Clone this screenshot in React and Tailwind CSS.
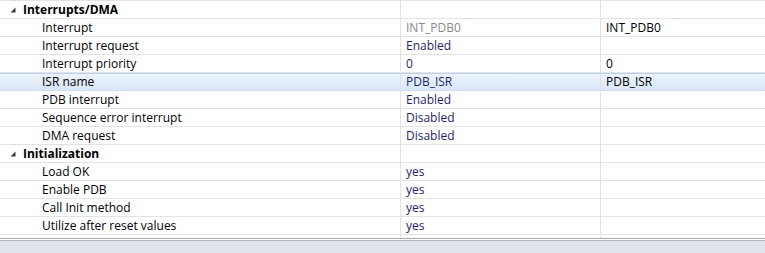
const rows = [
  { group: true, label: "Interrupts/DMA" },
  { label: "Interrupt", v1: "INT_PDB0", v1Muted: true, v2: "INT_PDB0" },
  { label: "Interrupt request", v1: "Enabled" },
  { label: "Interrupt priority", v1: "0", v2: "0" },
  { label: "ISR name", v1: "PDB_ISR", v2: "PDB_ISR", selected: true },
  { label: "PDB interrupt", v1: "Enabled" },
  { label: "Sequence error interrupt", v1: "Disabled" },
  { label: "DMA request", v1: "Disabled" },
  { group: true, label: "Initialization" },
  { label: "Load OK", v1: "yes" },
  { label: "Enable PDB", v1: "yes" },
  { label: "Call Init method", v1: "yes" },
  { label: "Utilize after reset values", v1: "yes" },
];

function Expander() {
  return (
    <svg width="6" height="6" viewBox="0 0 6 6" className="shrink-0">
      <polygon points="5.5,0.5 5.5,5.5 0.5,5.5" fill="#3c3c3c" />
    </svg>
  );
}

function Row({ row }) {
  const base = row.selected
    ? "bg-gradient-to-b from-[#edf4fc] to-[#d9e7f8] border-t border-t-[#b8d1ef] border-b border-b-[#cfdff3]"
    : "border-b border-b-[#e3e3e3]";
  return (
    <div className={`grid grid-cols-[401px_200px_1fr] h-[18px] ${base}`}>
      <div className="flex items-center border-r border-r-[#e3e3e3] h-full">
        {row.group ? (
          <div className="flex items-center pl-[10px] gap-[7px]">
            <Expander />
            <span className="font-bold text-black">{row.label}</span>
          </div>
        ) : (
          <span className="pl-[42px] text-black">{row.label}</span>
        )}
      </div>
      <div className="flex items-center border-r border-r-[#e3e3e3] h-full pl-[5px]">
        {row.v1 && (
          <span className={row.v1Muted ? "text-[#8a8a8a]" : "text-[#1f1f6b]"}>{row.v1}</span>
        )}
      </div>
      <div className="flex items-center h-full pl-[5px]">
        {row.v2 && <span className="text-black">{row.v2}</span>}
      </div>
    </div>
  );
}

export default function App() {
  return (
    <div
      className="w-[765px] h-[253px] bg-white overflow-hidden flex flex-col text-[12px] leading-none"
      style={{ fontFamily: '"Open Sans", "Noto Sans", sans-serif' }}
    >
      <div className="border-t border-t-[#e3e3e3]">
        {rows.map((r, i) => (
          <Row key={i} row={r} />
        ))}
      </div>
      <div className="grid grid-cols-[401px_200px_1fr] h-[3px]">
        <div className="border-r border-r-[#e3e3e3]" />
        <div className="border-r border-r-[#e3e3e3]" />
        <div />
      </div>
      <div className="h-[2px] border-t border-t-[#a8a8a8]" />
      <div className="border-t border-t-[#b4b4b4] flex-1 bg-[#dfe3eb]" />
    </div>
  );
}
